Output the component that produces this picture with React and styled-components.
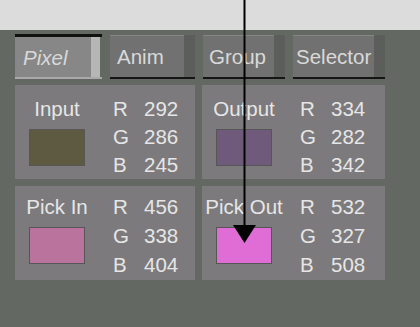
import React from 'react';
import styled, { createGlobalStyle } from 'styled-components';

const GlobalStyle = createGlobalStyle`
  html, body {
    margin: 0;
    padding: 0;
    background: #646862;
  }
`;

const Screen = styled.div`
  position: relative;
  width: 420px;
  height: 327px;
  display: flex;
  flex-direction: column;
  overflow: hidden;
  font-family: "Liberation Sans", Arial, sans-serif;
  font-size: 20.5px;
`;

const TopBand = styled.div`
  height: 30px;
  background-color: #dcdcdc;
`;

const Workspace = styled.div`
  flex: 1;
  background-color: #646862;
  padding: 4px 0 0 15px;
  display: flex;
  flex-direction: column;
  gap: 6px;
`;

const TabRow = styled.div`
  display: flex;
  gap: 8px;
  height: 45px;
`;

const Tab = styled.div`
  width: ${p => p.$w}px;
  display: flex;
  flex-direction: column;
  box-sizing: border-box;
  border-top: ${p => (p.$active ? '3px solid #111' : '1px solid transparent')};
  border-bottom: 2px solid ${p => (p.$active ? '#a9a9a9' : '#151515')};
`;

const TabBody = styled.div`
  flex: 1;
  display: flex;
`;

const TabFace = styled.div`
  flex: 1;
  display: flex;
  align-items: center;
  padding-left: ${p => p.$pad}px;
  white-space: nowrap;
  overflow: hidden;
  color: #d9d9d9;
  background-color: ${p => (p.$active ? '#878787' : '#717171')};
  border-top: 1px solid ${p => (p.$active ? '#878787' : '#868686')};
  font-style: ${p => (p.$active ? 'italic' : 'normal')};
`;

const TabStrip = styled.div`
  width: ${p => (p.$active ? 9 : 11)}px;
  margin-right: ${p => (p.$active ? 2 : 0)}px;
  background-color: ${p => (p.$active ? '#b6b6b6' : '#5b5e5a')};
`;

const PanelGrid = styled.div`
  display: grid;
  grid-template-columns: 180px 183px;
  grid-template-rows: 94px 94px;
  gap: 7px;
`;

const Panel = styled.div`
  background-color: #7c7a7c;
  display: flex;
  padding: ${p => p.$top}px 0 0 14px;
  box-sizing: border-box;
  color: #e6e6e6;
  line-height: 28px;
`;

const SwatchColumn = styled.div`
  width: 56px;
  display: flex;
  flex-direction: column;
  align-items: center;
`;

const Label = styled.div`
  white-space: nowrap;
  height: 28px;
`;

const Swatch = styled.div`
  margin-top: 6px;
  width: 56px;
  height: 37px;
  box-sizing: border-box;
  border: 1px solid #565656;
  background-color: ${p => p.$color};
`;

const Channels = styled.div`
  margin-left: 28px;
  display: grid;
  grid-template-columns: 31px auto;
`;

const Arrow = styled.svg`
  position: absolute;
  left: 0;
  top: 0;
  pointer-events: none;
`;

const tabs = [
  { name: 'Pixel', w: 87, pad: 8, active: true },
  { name: 'Anim', w: 85, pad: 7 },
  { name: 'Group', w: 82, pad: 6 },
  { name: 'Selector', w: 92, pad: 3 },
];

const panels = [
  { label: 'Input', color: '#5e5a41', rgb: [292, 286, 245], top: 10 },
  { label: 'Output', color: '#6f5a7b', rgb: [334, 282, 342], top: 10 },
  { label: 'Pick In', color: '#b9739c', rgb: [456, 338, 404], top: 7 },
  { label: 'Pick Out', color: '#e06dd5', rgb: [532, 327, 508], top: 7 },
];

export default function App() {
  return (
    <Screen>
      <GlobalStyle />
      <TopBand />
      <Workspace>
        <TabRow>
          {tabs.map(t => (
            <Tab key={t.name} $w={t.w} $active={t.active}>
              <TabBody>
                <TabFace $active={t.active} $pad={t.pad}>{t.name}</TabFace>
                <TabStrip $active={t.active} />
              </TabBody>
            </Tab>
          ))}
        </TabRow>
        <PanelGrid>
          {panels.map(p => (
            <Panel key={p.label} $top={p.top}>
              <SwatchColumn>
                <Label>{p.label}</Label>
                <Swatch $color={p.color} />
              </SwatchColumn>
              <Channels>
                {['R', 'G', 'B'].map((c, i) => (
                  <React.Fragment key={c}>
                    <span>{c}</span>
                    <span>{p.rgb[i]}</span>
                  </React.Fragment>
                ))}
              </Channels>
            </Panel>
          ))}
        </PanelGrid>
      </Workspace>
      <Arrow width="420" height="327" viewBox="0 0 420 327">
        <line x1="244.5" y1="0" x2="244.5" y2="228" stroke="#000" strokeWidth="2" />
        <polygon points="233,225 256,225 244.5,243" fill="#000" />
      </Arrow>
    </Screen>
  );
}
